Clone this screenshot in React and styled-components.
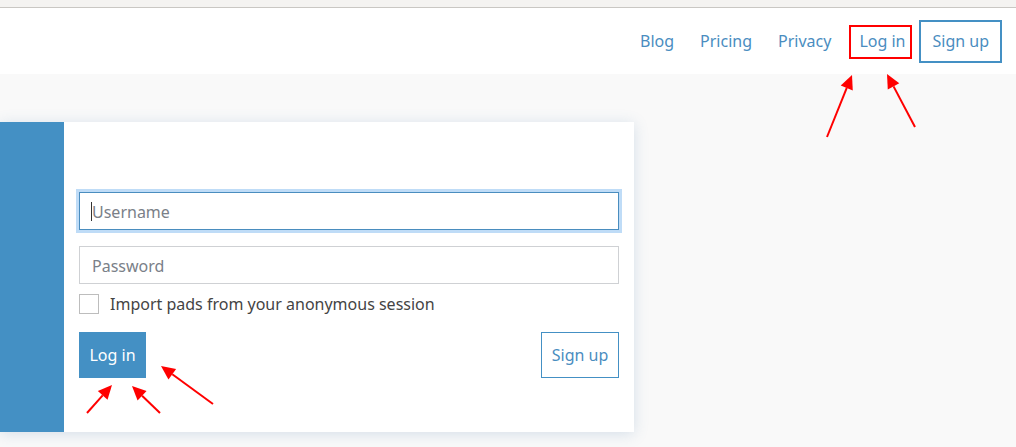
import React from "react";
import styled, { createGlobalStyle } from "styled-components";

const Global = createGlobalStyle`
  html, body { margin: 0; padding: 0; }
  body {
    background: #f9f9f9;
    font-family: "Noto Sans", "Open Sans", "Liberation Sans", sans-serif;
    width: 1016px;
    height: 447px;
    overflow: hidden;
    position: relative;
  }
  * { box-sizing: border-box; }
`;

const BLUE = "#4490c4";

const TopStrip = styled.div`
  height: 8px;
  background: #f4f3f1;
  border-bottom: 1px solid #c9c7c3;
`;

const Header = styled.header`
  height: 66px;
  background: #fff;
  display: flex;
  justify-content: flex-end;
  align-items: center;
  padding-right: 14px;
`;

const NavLink = styled.a`
  font-size: 16px;
  color: #4a8dbf;
  text-decoration: none;
  padding: 0 13px;
  line-height: 22px;
  &:nth-child(4) {
    padding: 0 12px 0 15px;
  }
`;

const NavButton = styled.a`
  font-size: 16px;
  color: #4a8dbf;
  text-decoration: none;
  border: 2px solid ${BLUE};
  height: 43px;
  padding: 0 11px;
  margin-left: 2px;
  display: flex;
  align-items: center;
`;

const Main = styled.main`
  padding-top: 48px;
`;

const Card = styled.section`
  width: 634px;
  height: 310px;
  background: #fff;
  display: flex;
  box-shadow: 0 2px 14px rgba(70, 120, 170, 0.2);
`;

const Sidebar = styled.div`
  width: 64px;
  background: ${BLUE};
`;

const Form = styled.form`
  flex: 1;
  padding: 70px 15px 0 15px;
  display: flex;
  flex-direction: column;
`;

const InputWrap = styled.div`
  position: relative;
  margin-bottom: ${(p) => p.$mb}px;
  ${(p) =>
    p.$focused &&
    `&::before {
      content: "";
      position: absolute;
      left: 12px;
      top: 10px;
      width: 1px;
      height: 19px;
      background: #333;
    }`}
`;

const Input = styled.input`
  display: block;
  width: 100%;
  height: 38px;
  border: 1px solid ${(p) => (p.$focused ? "#4a8dbf" : "#cfd1d4")};
  box-shadow: ${(p) => (p.$focused ? "0 0 0 3px #bfdcf7" : "none")};
  padding: 1px 12px 0;
  font-family: inherit;
  font-size: 16px;
  color: #333;
  outline: none;
  background: #fff;
  &::placeholder {
    color: #7a8088;
  }
`;

const CheckRow = styled.label`
  display: flex;
  align-items: center;
  gap: 11px;
  height: 20px;
  margin-bottom: 18px;
  font-size: 16px;
  color: #444;
`;

const Box = styled.span`
  width: 20px;
  height: 20px;
  border: 1px solid #bdbdbd;
  background: #fff;
`;

const Buttons = styled.div`
  display: flex;
  justify-content: space-between;
`;

const Primary = styled.button`
  height: 46px;
  width: 67px;
  border: none;
  background: ${BLUE};
  color: #fff;
  font-family: inherit;
  font-size: 16px;
  padding: 0;
`;

const Secondary = styled.button`
  height: 46px;
  width: 78px;
  border: 1px solid ${BLUE};
  background: #fff;
  color: #4a8dbf;
  font-family: inherit;
  font-size: 16px;
  padding: 0;
`;

const Annotations = styled.svg`
  position: absolute;
  left: 0;
  top: 0;
  pointer-events: none;
`;

function Arrow({ x1, y1, x2, y2 }) {
  const dx = x2 - x1;
  const dy = y2 - y1;
  const len = Math.hypot(dx, dy);
  const ux = dx / len;
  const uy = dy / len;
  const hl = 14;
  const hw = 6.5;
  const bx = x2 - ux * hl;
  const by = y2 - uy * hl;
  const px = -uy;
  const py = ux;
  return (
    <g>
      <line x1={x1} y1={y1} x2={bx} y2={by} stroke="#ff0000" strokeWidth="2" />
      <polygon
        points={`${x2},${y2} ${bx + px * hw},${by + py * hw} ${bx - px * hw},${by - py * hw}`}
        fill="#ff0000"
      />
    </g>
  );
}

export default function App() {
  return (
    <>
      <Global />
      <TopStrip />
      <Header>
        <NavLink href="#">Blog</NavLink>
        <NavLink href="#">Pricing</NavLink>
        <NavLink href="#">Privacy</NavLink>
        <NavLink href="#">Log in</NavLink>
        <NavButton href="#">Sign up</NavButton>
      </Header>
      <Main>
        <Card>
          <Sidebar />
          <Form onSubmit={(e) => e.preventDefault()}>
            <InputWrap $mb={16} $focused>
              <Input $focused placeholder="Username" />
            </InputWrap>
            <InputWrap $mb={10}>
              <Input type="password" placeholder="Password" />
            </InputWrap>
            <CheckRow>
              <Box />
              Import pads from your anonymous session
            </CheckRow>
            <Buttons>
              <Primary type="button">Log in</Primary>
              <Secondary type="button">Sign up</Secondary>
            </Buttons>
          </Form>
        </Card>
      </Main>
      <Annotations width="1016" height="447" viewBox="0 0 1016 447">
        <rect x="850" y="26" width="61" height="32" fill="none" stroke="#ff0000" strokeWidth="2" />
        <Arrow x1={827} y1={137} x2={852} y2={75} />
        <Arrow x1={915} y1={127} x2={887} y2={74} />
        <Arrow x1={87} y1={413} x2={112} y2={385} />
        <Arrow x1={160} y1={413} x2={132} y2={386} />
        <Arrow x1={213} y1={404} x2={161} y2={366} />
      </Annotations>
    </>
  );
}
